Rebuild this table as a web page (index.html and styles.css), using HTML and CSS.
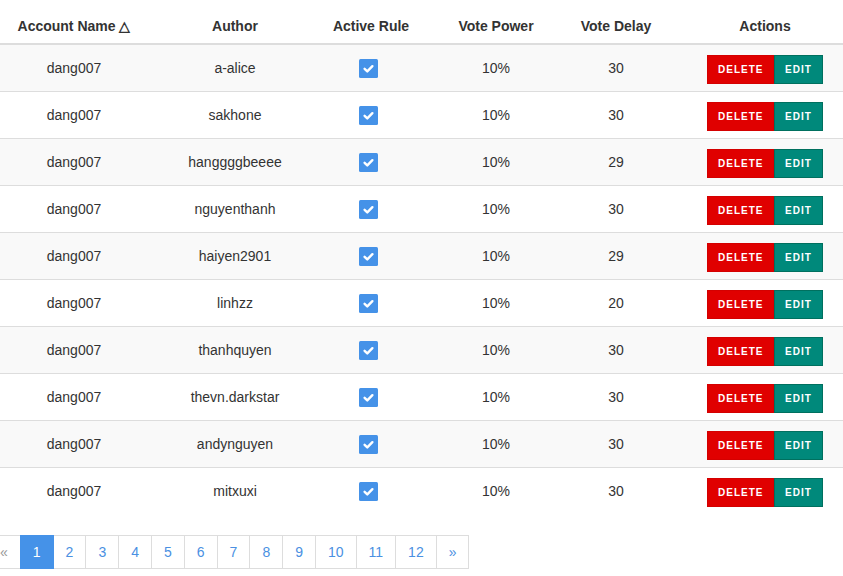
FILE: index.html
```html
<!DOCTYPE html>
<html>
<head>
<meta charset="utf-8">
<link rel="stylesheet" href="styles.css">
</head>
<body>
<div class="page">
  <table class="rules">
    <colgroup>
      <col class="c1"><col class="c2"><col class="c3"><col class="c4"><col class="c5"><col class="c6">
    </colgroup>
    <thead>
      <tr>
        <th>Account Name △</th>
        <th>Author</th>
        <th>Active Rule</th>
        <th>Vote Power</th>
        <th>Vote Delay</th>
        <th class="act">Actions</th>
      </tr>
    </thead>
    <tbody>
      <tr><td>dang007</td><td>a-alice</td><td><span class="cb"><svg viewBox="0 0 19 19" width="19" height="19"><rect width="19" height="19" rx="1.5" fill="#4592e8"/><path d="M5.6 9.8 L8.3 12.4 L13.4 7.2" fill="none" stroke="#fff" stroke-width="2.4" stroke-linecap="round" stroke-linejoin="round"/></svg></span></td><td>10%</td><td>30</td><td class="act"><span class="btns"><button class="btn del">DELETE</button><button class="btn edit">EDIT</button></span></td></tr>
      <tr><td>dang007</td><td>sakhone</td><td><span class="cb"><svg viewBox="0 0 19 19" width="19" height="19"><rect width="19" height="19" rx="1.5" fill="#4592e8"/><path d="M5.6 9.8 L8.3 12.4 L13.4 7.2" fill="none" stroke="#fff" stroke-width="2.4" stroke-linecap="round" stroke-linejoin="round"/></svg></span></td><td>10%</td><td>30</td><td class="act"><span class="btns"><button class="btn del">DELETE</button><button class="btn edit">EDIT</button></span></td></tr>
      <tr><td>dang007</td><td>hanggggbeeee</td><td><span class="cb"><svg viewBox="0 0 19 19" width="19" height="19"><rect width="19" height="19" rx="1.5" fill="#4592e8"/><path d="M5.6 9.8 L8.3 12.4 L13.4 7.2" fill="none" stroke="#fff" stroke-width="2.4" stroke-linecap="round" stroke-linejoin="round"/></svg></span></td><td>10%</td><td>29</td><td class="act"><span class="btns"><button class="btn del">DELETE</button><button class="btn edit">EDIT</button></span></td></tr>
      <tr><td>dang007</td><td>nguyenthanh</td><td><span class="cb"><svg viewBox="0 0 19 19" width="19" height="19"><rect width="19" height="19" rx="1.5" fill="#4592e8"/><path d="M5.6 9.8 L8.3 12.4 L13.4 7.2" fill="none" stroke="#fff" stroke-width="2.4" stroke-linecap="round" stroke-linejoin="round"/></svg></span></td><td>10%</td><td>30</td><td class="act"><span class="btns"><button class="btn del">DELETE</button><button class="btn edit">EDIT</button></span></td></tr>
      <tr><td>dang007</td><td>haiyen2901</td><td><span class="cb"><svg viewBox="0 0 19 19" width="19" height="19"><rect width="19" height="19" rx="1.5" fill="#4592e8"/><path d="M5.6 9.8 L8.3 12.4 L13.4 7.2" fill="none" stroke="#fff" stroke-width="2.4" stroke-linecap="round" stroke-linejoin="round"/></svg></span></td><td>10%</td><td>29</td><td class="act"><span class="btns"><button class="btn del">DELETE</button><button class="btn edit">EDIT</button></span></td></tr>
      <tr><td>dang007</td><td>linhzz</td><td><span class="cb"><svg viewBox="0 0 19 19" width="19" height="19"><rect width="19" height="19" rx="1.5" fill="#4592e8"/><path d="M5.6 9.8 L8.3 12.4 L13.4 7.2" fill="none" stroke="#fff" stroke-width="2.4" stroke-linecap="round" stroke-linejoin="round"/></svg></span></td><td>10%</td><td>20</td><td class="act"><span class="btns"><button class="btn del">DELETE</button><button class="btn edit">EDIT</button></span></td></tr>
      <tr><td>dang007</td><td>thanhquyen</td><td><span class="cb"><svg viewBox="0 0 19 19" width="19" height="19"><rect width="19" height="19" rx="1.5" fill="#4592e8"/><path d="M5.6 9.8 L8.3 12.4 L13.4 7.2" fill="none" stroke="#fff" stroke-width="2.4" stroke-linecap="round" stroke-linejoin="round"/></svg></span></td><td>10%</td><td>30</td><td class="act"><span class="btns"><button class="btn del">DELETE</button><button class="btn edit">EDIT</button></span></td></tr>
      <tr><td>dang007</td><td>thevn.darkstar</td><td><span class="cb"><svg viewBox="0 0 19 19" width="19" height="19"><rect width="19" height="19" rx="1.5" fill="#4592e8"/><path d="M5.6 9.8 L8.3 12.4 L13.4 7.2" fill="none" stroke="#fff" stroke-width="2.4" stroke-linecap="round" stroke-linejoin="round"/></svg></span></td><td>10%</td><td>30</td><td class="act"><span class="btns"><button class="btn del">DELETE</button><button class="btn edit">EDIT</button></span></td></tr>
      <tr><td>dang007</td><td>andynguyen</td><td><span class="cb"><svg viewBox="0 0 19 19" width="19" height="19"><rect width="19" height="19" rx="1.5" fill="#4592e8"/><path d="M5.6 9.8 L8.3 12.4 L13.4 7.2" fill="none" stroke="#fff" stroke-width="2.4" stroke-linecap="round" stroke-linejoin="round"/></svg></span></td><td>10%</td><td>30</td><td class="act"><span class="btns"><button class="btn del">DELETE</button><button class="btn edit">EDIT</button></span></td></tr>
      <tr><td>dang007</td><td>mitxuxi</td><td><span class="cb"><svg viewBox="0 0 19 19" width="19" height="19"><rect width="19" height="19" rx="1.5" fill="#4592e8"/><path d="M5.6 9.8 L8.3 12.4 L13.4 7.2" fill="none" stroke="#fff" stroke-width="2.4" stroke-linecap="round" stroke-linejoin="round"/></svg></span></td><td>10%</td><td>30</td><td class="act"><span class="btns"><button class="btn del">DELETE</button><button class="btn edit">EDIT</button></span></td></tr>
    </tbody>
  </table>
  <ul class="pagination">
    <li><a>«</a></li>
    <li class="active"><a>1</a></li>
    <li><a>2</a></li>
    <li><a>3</a></li>
    <li><a>4</a></li>
    <li><a>5</a></li>
    <li><a>6</a></li>
    <li><a>7</a></li>
    <li><a>8</a></li>
    <li><a>9</a></li>
    <li><a>10</a></li>
    <li><a>11</a></li>
    <li><a>12</a></li>
    <li><a>»</a></li>
  </ul>
</div>
</body>
</html>
```
FILE: styles.css
```css
html, body {
  margin: 0;
  padding: 0;
  background: #fff;
  overflow: hidden;
}
body {
  font-family: "Liberation Sans", Arial, sans-serif;
  font-size: 14px;
  line-height: 20px;
  color: #333;
}
.rules {
  width: 843px;
  table-layout: fixed;
  border-collapse: separate;
  border-spacing: 0;
}
.c1 { width: 148px; }
.c2 { width: 174px; }
.c3 { width: 98px; }
.c4 { width: 152px; }
.c5 { width: 88px; }
.c6 { width: 183px; }
.rules th {
  box-sizing: border-box;
  height: 45px;
  padding: 16px 8px 7px;
  border-bottom: 2px solid #ddd;
  font-weight: bold;
  text-align: center;
  color: #333;
  white-space: nowrap;
}
.rules td {
  box-sizing: border-box;
  height: 47px;
  padding: 0 8px;
  border-bottom: 1px solid #ddd;
  text-align: center;
  vertical-align: middle;
  line-height: 20px;
}
.rules tbody tr:nth-child(odd) td {
  background: #f9f9f9;
}
.rules tbody tr:last-child td {
  border-bottom-color: transparent;
}
.rules .act {
  padding-left: 35px;
  padding-right: 8px;
}
.cb {
  display: inline-block;
  width: 19px;
  height: 19px;
  margin-right: 5px;
  vertical-align: middle;
}
.cb svg { display: block; }
.btns {
  display: inline-flex;
  margin-top: 3px;
  vertical-align: middle;
}
.btn {
  height: 29px;
  padding: 0 10px;
  margin: 0;
  border: 1px solid;
  border-radius: 0;
  font-family: "Liberation Sans", Arial, sans-serif;
  font-size: 10px;
  font-weight: bold;
  letter-spacing: 1px;
  color: #fff;
  cursor: pointer;
}
.btn.del {
  width: 67px;
  background: #e00000;
  border-color: #d40000;
}
.btn.edit {
  width: 49px;
  background: #00897b;
  border-color: #00705f;
}
.pagination {
  display: flex;
  list-style: none;
  margin: 20px 0 0 -13px;
  padding: 0;
}
.pagination li a {
  display: block;
  padding: 6px 12px;
  line-height: 20px;
  border: 1px solid #ddd;
  margin-left: -1px;
  color: #4a90e2;
  background: #fff;
}
.pagination li:first-child a {
  margin-left: 0;
  color: #999;
}
.pagination li.active a {
  background: #4592e8;
  border-color: #4592e8;
  color: #fff;
  position: relative;
}
```
